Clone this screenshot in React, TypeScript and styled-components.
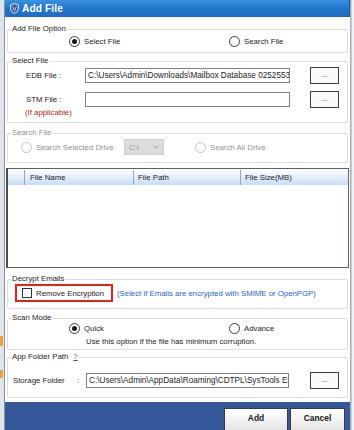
import React from "react";
import styled, { createGlobalStyle } from "styled-components";

const GlobalStyle = createGlobalStyle`
  html, body { margin: 0; padding: 0; }
  body {
    background: #e6ebf1;
    font-family: "Liberation Sans", Arial, sans-serif;
    font-size: 7.8px;
    color: #1c1c1c;
    overflow: hidden;
  }
  * { box-sizing: border-box; }
`;

const Page = styled.div`
  display: flex;
  height: 430px;
  width: 354px;
  overflow: hidden;
`;

const LeftGutter = styled.div`
  width: 4px;
  background: #dfe5ec;
  display: flex;
  flex-direction: column;
`;

const GutterMark = styled.div<{ $top: number; $h: number; $color: string }>`
  margin-top: ${(p) => p.$top}px;
  height: ${(p) => p.$h}px;
  width: 3px;
  background: ${(p) => p.$color};
`;

const RightGutter = styled.div`
  width: 3px;
  background: #eef2f6;
  border-left: 1px solid #c9cfd6;
`;

const Window = styled.div`
  width: 347px;
  height: 432px;
  display: flex;
  flex-direction: column;
  background: #ffffff;
  border-left: 1px solid #8e9296;
  border-right: 1px solid #a9adb2;
`;

const TitleBar = styled.div`
  height: 17px;
  flex: none;
  display: flex;
  align-items: center;
  gap: 3px;
  padding-left: 5px;
  background: linear-gradient(#3d91e2, #2278cd 45%, #1b6cc2);
  border-right: 1px solid #165aa3;
`;

const TitleText = styled.span`
  color: #ffffff;
  font-weight: bold;
  font-size: 10.2px;
  letter-spacing: 0.1px;
`;

const Body = styled.div`
  display: flex;
  flex-direction: column;
  padding: 0 2px;
`;

const Group = styled.fieldset<{ $top: number; $h: number; $disabled?: boolean }>`
  margin: ${(p) => p.$top}px 0 0 0;
  padding: 0;
  min-width: 0;
  height: ${(p) => p.$h}px;
  border: 1px solid #dcdcdc;
  border-radius: 2px;
  color: ${(p) => (p.$disabled ? "#8f8f8f" : "#1c1c1c")};
`;

const Legend = styled.legend`
  margin-left: 3px;
  padding: 0 1px;
  line-height: 10px;
  font-size: 7.8px;
`;

const HelpLink = styled.span`
  color: #1f5fc4;
  text-decoration: underline;
  margin-left: 5px;
`;

const RadioRow = styled.div<{ $h: number }>`
  display: grid;
  grid-template-columns: 160px 1fr;
  align-items: center;
  height: ${(p) => p.$h}px;
  padding-left: 61px;
`;

const RadioLabel = styled.label<{ $disabled?: boolean }>`
  display: flex;
  align-items: center;
  gap: 4px;
  white-space: nowrap;
  color: ${(p) => (p.$disabled ? "#8f8f8f" : "#1c1c1c")};
`;

const RadioCircle = styled.span<{ $checked?: boolean; $disabled?: boolean }>`
  width: 11px;
  height: 11px;
  border-radius: 50%;
  border: 1px solid ${(p) => (p.$disabled ? "#c4c4c4" : "#3a3a3a")};
  background: #ffffff;
  display: flex;
  align-items: center;
  justify-content: center;
  flex: none;
  &::after {
    content: "";
    width: 5px;
    height: 5px;
    border-radius: 50%;
    background: ${(p) => (p.$checked ? "#1a1a1a" : "transparent")};
  }
`;

const FileRow = styled.div<{ $top: number }>`
  display: grid;
  grid-template-columns: 59px 205px 49px;
  align-items: center;
  height: 17px;
  margin-top: ${(p) => p.$top}px;
  padding-left: 18px;
`;

const FieldLabel = styled.span`
  white-space: nowrap;
`;

const Note = styled.div`
  padding-left: 17px;
  line-height: 9px;
  color: #b52020;
`;

const TextInput = styled.div`
  height: 15px;
  border: 1px solid #7f8388;
  background: #ffffff;
  padding: 0 2px;
  display: flex;
  align-items: center;
  white-space: nowrap;
  overflow: hidden;
  font-size: 8.2px;
`;

const BrowseButton = styled.div`
  justify-self: end;
  width: 29px;
  height: 17px;
  border: 1px solid #3b3b3b;
  background: #fafafa;
  display: flex;
  align-items: center;
  justify-content: center;
  font-size: 7px;
  padding-bottom: 3px;
`;

const SearchRow = styled.div`
  display: grid;
  grid-template-columns: 103px 40px 1fr;
  align-items: center;
  margin-top: 1px;
  height: 16px;
  padding-left: 13px;
`;

const DriveSelect = styled.div`
  height: 16px;
  background: #dcdcdc;
  border: 1px solid #d0d0d0;
  display: flex;
  align-items: center;
  justify-content: space-between;
  padding: 0 4px 0 4px;
  color: #9a9a9a;
`;

const SearchAll = styled.div`
  padding-left: 31px;
`;

const ListView = styled.div`
  margin: 5px -1px 0 -1px;
  height: 100px;
  border: 1px solid #5e6064;
  border-left: 2px solid #4a4c50;
  background: #ffffff;
`;

const ListHeader = styled.div`
  display: grid;
  grid-template-columns: 17px 109px 107px 1fr;
  height: 15px;
  margin-top: 1px;
  background: linear-gradient(#ffffff, #e8f0fb 40%, #c8dcf4);
`;

const HeaderCell = styled.div<{ $pad: number; $sep?: boolean }>`
  display: flex;
  align-items: center;
  padding-left: ${(p) => p.$pad}px;
  border-right: ${(p) => (p.$sep ? "1px solid #8ea6c4" : "none")};
  white-space: nowrap;
`;

const DecryptRow = styled.div`
  display: flex;
  align-items: center;
  gap: 4px;
  padding-left: 7px;
`;

const RedFrame = styled.div`
  width: 98px;
  height: 18px;
  border: 2px solid #e2231a;
  display: flex;
  align-items: center;
  gap: 4px;
  padding-left: 5px;
`;

const CheckBox = styled.span`
  width: 10px;
  height: 10px;
  border: 1px solid #333333;
  background: #ffffff;
  flex: none;
`;

const BlueNote = styled.span`
  color: #2268cc;
  white-space: nowrap;
`;

const Hint = styled.div`
  margin-top: 4px;
  line-height: 10px;
  padding-left: 78px;
  white-space: nowrap;
`;

const StorageRow = styled.div`
  display: grid;
  grid-template-columns: 64px 9px 203px 50px;
  align-items: center;
  height: 17px;
  margin-top: 10px;
  padding-left: 5px;
`;

const Footer = styled.div`
  margin-top: 4px;
  height: 30px;
  background: #34589a;
  display: flex;
  justify-content: flex-end;
  align-items: flex-start;
  gap: 2px;
  padding: 6px 5px 0 0;
`;

const FooterButton = styled.div<{ $w: number }>`
  width: ${(p) => p.$w}px;
  height: 24px;
  border: 1px solid #3a3a3a;
  background: linear-gradient(#ffffff, #f2f2f2 50%, #e2e2e2);
  display: flex;
  align-items: flex-start;
  justify-content: center;
  padding-top: 4px;
  font-weight: bold;
  font-size: 8.4px;
  color: #1a1a1a;
`;

const ShieldIcon = () => (
  <svg width="9" height="11" viewBox="0 0 9 11">
    <path
      d="M4.5 0.6 L8.4 2 V5.4 C8.4 7.9 6.5 9.7 4.5 10.4 C2.5 9.7 0.6 7.9 0.6 5.4 V2 Z"
      fill="#3f5f93"
      stroke="#dfe8f4"
      strokeWidth="1"
    />
    <path d="M2.6 3.6 L4.5 7.6 L6.4 3.6" fill="none" stroke="#b9cbe6" strokeWidth="1" />
  </svg>
);

const Radio = ({
  label,
  checked,
  disabled,
}: {
  label: string;
  checked?: boolean;
  disabled?: boolean;
}) => (
  <RadioLabel $disabled={disabled}>
    <RadioCircle $checked={checked} $disabled={disabled} />
    {label}
  </RadioLabel>
);

export default function App() {
  return (
    <>
      <GlobalStyle />
      <Page>
        <LeftGutter>
          <GutterMark $top={336} $h={10} $color="#e9a23b" />
          <GutterMark $top={24} $h={8} $color="#e9a23b" />
        </LeftGutter>
        <Window>
          <TitleBar>
            <ShieldIcon />
            <TitleText>Add File</TitleText>
          </TitleBar>
          <Body>
            <Group $top={7} $h={29}>
              <Legend>Add File Option</Legend>
              <RadioRow $h={14}>
                <Radio label="Select File" checked />
                <Radio label="Search File" />
              </RadioRow>
            </Group>

            <Group $top={3} $h={67}>
              <Legend>Select File</Legend>
              <FileRow $top={1}>
                <FieldLabel>EDB File :</FieldLabel>
                <TextInput>C:\Users\Admin\Downloads\Mailbox Database 0252553816.edb</TextInput>
                <BrowseButton>...</BrowseButton>
              </FileRow>
              <FileRow $top={7}>
                <FieldLabel>STM File :</FieldLabel>
                <TextInput />
                <BrowseButton>...</BrowseButton>
              </FileRow>
              <Note>(If applicable)</Note>
            </Group>

            <Group $top={5} $h={35} $disabled>
              <Legend>Search File</Legend>
              <SearchRow>
                <Radio label="Search Selected Drive" disabled />
                <DriveSelect>
                  <span>C:\</span>
                  <svg width="6" height="4" viewBox="0 0 6 4">
                    <path d="M0.5 0.5 L3 3 L5.5 0.5" fill="none" stroke="#a0a0a0" strokeWidth="0.9" />
                  </svg>
                </DriveSelect>
                <SearchAll>
                  <Radio label="Search All Drive" disabled />
                </SearchAll>
              </SearchRow>
            </Group>

            <ListView>
              <ListHeader>
                <HeaderCell $pad={0} $sep />
                <HeaderCell $pad={5} $sep>File Name</HeaderCell>
                <HeaderCell $pad={4} $sep>File Path</HeaderCell>
                <HeaderCell $pad={4}>File Size(MB)</HeaderCell>
              </ListHeader>
            </ListView>

            <Group $top={6} $h={35}>
              <Legend>Decrypt Emails</Legend>
              <DecryptRow>
                <RedFrame>
                  <CheckBox />
                  <span>Remove Encryption</span>
                </RedFrame>
                <BlueNote>(Select if Emails are encrypted with SMIME or OpenPGP)</BlueNote>
              </DecryptRow>
            </Group>

            <Group $top={4} $h={37}>
              <Legend>Scan Mode</Legend>
              <RadioRow $h={10}>
                <Radio label="Quick" checked />
                <Radio label="Advance" />
              </RadioRow>
              <Hint>Use this option if the file has minimum corruption.</Hint>
            </Group>

            <Group $top={2} $h={46}>
              <Legend>
                App Folder Path<HelpLink>?</HelpLink>
              </Legend>
              <StorageRow>
                <FieldLabel>Storage Folder</FieldLabel>
                <FieldLabel>:</FieldLabel>
                <TextInput>C:\Users\Admin\AppData\Roaming\CDTPL\SysTools Exchange</TextInput>
                <BrowseButton>...</BrowseButton>
              </StorageRow>
            </Group>
          </Body>
          <Footer>
            <FooterButton $w={64}>Add</FooterButton>
            <FooterButton $w={55}>Cancel</FooterButton>
          </Footer>
        </Window>
        <RightGutter />
      </Page>
    </>
  );
}
